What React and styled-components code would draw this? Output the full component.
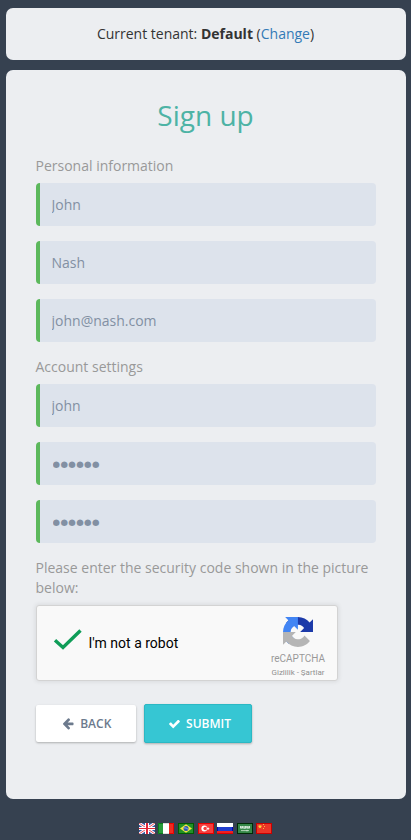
import React from "react";
import styled, { createGlobalStyle } from "styled-components";

const GlobalStyle = createGlobalStyle`
  *, *::before, *::after { box-sizing: border-box; }
  body {
    margin: 0;
    background: #364150;
    font-family: "Open Sans", sans-serif;
    font-size: 14px;
    line-height: 20px;
    color: #333;
  }
`;

const Page = styled.div`
  display: flex;
  flex-direction: column;
  min-height: 840px;
  padding: 8px 5px 0 6px;
`;

const Panel = styled.section`
  background: #eceef1;
  border-radius: 7px;
`;

const TenantPanel = styled(Panel)`
  height: 52px;
  padding: 16px 1px 0 0;
  text-align: center;
`;

const Link = styled.a`
  color: #337ab7;
  text-decoration: none;
`;

const FormPanel = styled(Panel)`
  height: 729px;
  margin-top: 10px;
  padding: 29px 30px 0;
`;

const Title = styled.h3`
  margin: 0;
  padding-right: 1px;
  font-size: 28px;
  font-weight: 400;
  line-height: 32px;
  text-align: center;
  color: #4db3a5;
`;

const Hint = styled.p`
  margin: ${(p) => p.$top}px 0 ${(p) => p.$bottom}px -0.5px;
  color: #999;
`;

const Fields = styled.div`
  display: grid;
  gap: 15px;
`;

const Field = styled.input`
  display: block;
  width: 100%;
  height: 43px;
  margin: 0;
  padding: 6px 12px 6px 11.5px;
  border: 0 solid #5cb85c;
  border-left-width: 4px;
  border-radius: 4px;
  background: #dde3ec;
  color: #8290a3;
  font: 14px/20px "Open Sans", sans-serif;
  outline: none;
`;

const SecretField = styled(Field)`
  padding-left: 12.5px;
  font-family: "DejaVu Sans", sans-serif;
  font-size: 8.6px;
  letter-spacing: 0.4px;
`;

const Captcha = styled.div`
  display: flex;
  width: 302px;
  height: 76px;
  border: 1px solid #d3d3d3;
  border-radius: 3px;
  background: #f9f9f9;
  box-shadow: 0 0 4px 1px rgba(0, 0, 0, 0.08);
`;

const CaptchaCheck = styled.div`
  display: flex;
  flex: 1;
  align-items: center;
  padding-left: 16px;
  font-family: Roboto, sans-serif;
  color: #000;

  svg { margin: -8px 5.500px 0 0; }
`;

const CaptchaBrand = styled.div`
  display: flex;
  flex-direction: column;
  align-items: center;
  width: 78px;
  padding-top: 11px;
  font-family: Roboto, sans-serif;
  color: #999;
`;

const BrandName = styled.span`
  margin-top: 5px;
  font-size: 10px;
  line-height: 14px;
`;

const BrandLinks = styled.span`
  font-size: 8px;
  line-height: 13px;
  color: #909090;
`;

const Actions = styled.div`
  display: flex;
  align-items: center;
  gap: 8px;
  margin-top: 23px;
`;

const Button = styled.button`
  display: flex;
  align-items: center;
  justify-content: center;
  gap: 6px;
  width: ${(p) => (p.$primary ? 108 : 100)}px;
  height: ${(p) => (p.$primary ? 39 : 37)}px;
  padding: 0 0 0 ${(p) => (p.$primary ? 4 : 2.5)}px;
  border: ${(p) => (p.$primary ? "1px solid #2bb8c4" : "0")};
  border-radius: 2px;
  background: ${(p) => (p.$primary ? "#36c6d3" : "#fff")};
  color: ${(p) => (p.$primary ? "#fff" : "#6c7a8d")};
  font: 600 12px/18px "Open Sans", sans-serif;
  text-transform: uppercase;
  box-shadow: 0 1px 3px rgba(0, 0, 0, 0.1), 0 1px 2px rgba(0, 0, 0, 0.18);
`;

const Languages = styled.nav`
  display: flex;
  justify-content: center;
  gap: 3.55px;
  margin-top: 24px;
  padding-right: 0.9px;
`;

const Flag = styled.svg.attrs({ viewBox: "0 0 16 11" })`
  display: block;
  width: 16px;
  height: 11px;
`;

const Frame = ({ fill }) => (
  <rect x="0.5" y="0.5" width="15" height="10" fill="none" stroke={fill} />
);

const Star = ({ x, y, size, fill }) => (
  <path
    transform={`translate(${x} ${y}) scale(${size})`}
    d="M0-1 .24-.31.95-.31.38.12.59.81 0 .4-.59.81-.38.12-.95-.31-.24-.31Z"
    fill={fill}
  />
);

const Britain = () => (
  <Flag>
    <path fill="#3458a4" d="M0 0h16v11H0z" />
    <path stroke="#fff" strokeWidth="2.8" d="m0 0 16 11M16 0 0 11" />
    <path stroke="#e5505c" strokeWidth="1" d="m0 0 16 11M16 0 0 11" />
    <path stroke="#fff" strokeWidth="4" d="M8 0v11" />
    <path stroke="#fff" strokeWidth="3" d="M0 5.5h16" />
    <path stroke="#df2638" strokeWidth="2" d="M8 0v11" />
    <path stroke="#df2638" strokeWidth="1" d="M0 5.5h16" />
  </Flag>
);

const Italy = () => (
  <Flag>
    <path fill="#289b3c" d="M0 0h5v11H0z" />
    <path fill="#fff" d="M5 0h6v11H5z" />
    <path fill="#f02b20" d="M11 0h5v11h-5z" />
    <path stroke="#087c19" fill="none" d="M5 .5H.5v10H5" />
    <path stroke="#e00" fill="none" d="M11 .5h4.500v10H11" />
    <path fill="#ddd" d="M5 0h6v1H5zM5 10h6v1H5z" />
  </Flag>
);

const Brazil = () => (
  <Flag>
    <path fill="#229126" d="M0 0h16v11H0z" />
    <Frame fill="#005b00" />
    <path fill="#f5e642" d="m8 1.200 6 4.300-6 4.300-6-4.300z" />
    <circle cx="8" cy="5.500" r="2.500" fill="#2856b0" />
    <path stroke="#b9d5ed" strokeWidth=".7" fill="none" d="M5.800 4.800q2.500-.3 4.400 1.500" />
  </Flag>
);

const Turkey = () => (
  <Flag>
    <path fill="#f53d3d" d="M0 0h16v11H0z" />
    <Frame fill="#e80000" />
    <circle cx="6.300" cy="5.500" r="2.900" fill="#fff" />
    <circle cx="7.200" cy="5.500" r="1.800" fill="#f53d3d" />
    <Star x={10} y={5.5} size={1.9} fill="#fff" />
  </Flag>
);

const Russia = () => (
  <Flag>
    <path fill="#fff" d="M0 0h16v4H0z" />
    <path fill="#203dcd" d="M0 4h16v4H0z" />
    <path fill="#f02020" d="M0 8h16v3H0z" />
    <path fill="#00b" d="M0 4h1v4H0zM15 4h1v4h-1z" />
    <path fill="#d00" d="M0 10h16v1H0z" />
  </Flag>
);

const SaudiArabia = () => (
  <Flag>
    <path fill="#358748" d="M0 0h16v11H0z" />
    <Frame fill="#002b05" />
    <path fill="#9fc7a8" d="M3 3h10v2.500H3z" />
    <path stroke="#e6f2e8" strokeWidth=".7" fill="none" d="M3.500 3v2h2V3m1 2.300h2V3m1.500 0v2h2.500V3M4 7.600h8m-2-.8v1.600" />
  </Flag>
);

const China = () => (
  <Flag>
    <path fill="#ec3528" d="M0 0h16v11H0z" />
    <Frame fill="#c90000" />
    <Star x={4} y={3.6} size={2.4} fill="#ffd83c" />
    <path fill="#ffb43c" d="M7 1h1v1H7zM8 3h1v1H8zM7 5h1v1H7z" />
  </Flag>
);

const flags = [Britain, Italy, Brazil, Turkey, Russia, SaudiArabia, China];

const Tick = () => (
  <svg width="30" height="23" viewBox="0 0 30 23" fill="none">
    <path d="M2 12.200 10 19.500 27.500 2.500" stroke="#0f9d58" strokeWidth="3.400" />
  </svg>
);

const RecaptchaLogo = () => (
  <svg width="30" height="30" viewBox="0 0 64 64">
    <path fill="#1c3aa9" d="M64 31.955l-.033-1.37V4.687l-7.16 7.16C50.948 4.674 42.033.093 32.05.093c-10.4 0-19.622 4.96-25.458 12.64l11.736 11.86a15.55 15.55 0 0 1 4.754-5.334c2.05-1.6 4.952-2.906 8.968-2.906.485 0 .86.057 1.135.163 4.976.393 9.288 3.14 11.828 7.124l-8.307 8.307L64 31.953" />
    <path fill="#4285f4" d="M31.862.094l-1.37.033H4.594l7.16 7.16C4.58 13.147 0 22.06 0 32.045c0 10.4 4.96 19.622 12.64 25.458L24.5 45.768a15.55 15.55 0 0 1-5.334-4.754c-1.6-2.05-2.906-4.952-2.906-8.968 0-.485.057-.86.163-1.135.393-4.976 3.14-9.288 7.124-11.828l8.307 8.307L31.86.095" />
    <path fill="#b5b5b5" d="M.001 32.045l.033 1.37v25.898l7.16-7.16c5.86 7.173 14.774 11.754 24.76 11.754 10.4 0 19.622-4.96 25.458-12.64l-11.736-11.86a15.55 15.55 0 0 1-4.754 5.334c-2.05 1.6-4.952 2.906-8.968 2.906-.485 0-.86-.057-1.135-.163-4.976-.393-9.288-3.14-11.828-7.124l8.307-8.307c-10.522.04-22.4.066-27.295-.005" />
  </svg>
);

const ArrowLeft = () => (
  <svg width="11" height="12" viewBox="64 60 1536 1570" fill="currentColor">
    <path d="M1536 768v128q0 53-32.500 90.500t-84.500 37.500H715l293 294q38 36 38 90t-38 90l-75 76q-37 37-90 37-52 0-91-37l-651-652q-37-37-37-90 0-52 37-91l651-650q38-38 91-38 52 0 90 38l75 74q38 38 38 91t-38 91L715 640h704q52 0 84.500 37.500t32.500 90.500z" />
  </svg>
);

const Check = () => (
  <svg width="11" height="11" viewBox="110 60 1580 1580" fill="currentColor">
    <path d="M1671 566q0 40-28 68l-724 724-136 136q-28 28-68 28t-68-28l-136-136-362-362q-28-28-28-68t28-68l136-136q28-28 68-28t68 28l294 295 656-657q28-28 68-28t68 28l136 136q28 28 28 68z" />
  </svg>
);

export default function App() {
  return (
    <>
      <GlobalStyle />
      <Page>
        <TenantPanel>
          Current tenant: <strong>Default</strong> (<Link>Change</Link>)
        </TenantPanel>
        <FormPanel>
          <Title>Sign up</Title>
          <Hint $top={25} $bottom={7}>Personal information</Hint>
          <Fields>
            <Field defaultValue="John" />
            <Field defaultValue="Nash" />
            <Field defaultValue="john@nash.com" />
          </Fields>
          <Hint $top={15} $bottom={7}>Account settings</Hint>
          <Fields>
            <Field defaultValue="john" />
            <SecretField defaultValue="●●●●●●" />
            <SecretField defaultValue="●●●●●●" />
          </Fields>
          <Hint $top={15} $bottom={7}>
            Please enter the security code shown in the picture below:
          </Hint>
          <Captcha>
            <CaptchaCheck>
              <Tick />
              I'm not a robot
            </CaptchaCheck>
            <CaptchaBrand>
              <RecaptchaLogo />
              <BrandName>reCAPTCHA</BrandName>
              <BrandLinks>Gizlilik - Şartlar</BrandLinks>
            </CaptchaBrand>
          </Captcha>
          <Actions>
            <Button>
              <ArrowLeft />
              Back
            </Button>
            <Button $primary>
              <Check />
              Submit
            </Button>
          </Actions>
        </FormPanel>
        <Languages>
          {flags.map((Item, i) => (
            <Item key={i} />
          ))}
        </Languages>
      </Page>
    </>
  );
}
